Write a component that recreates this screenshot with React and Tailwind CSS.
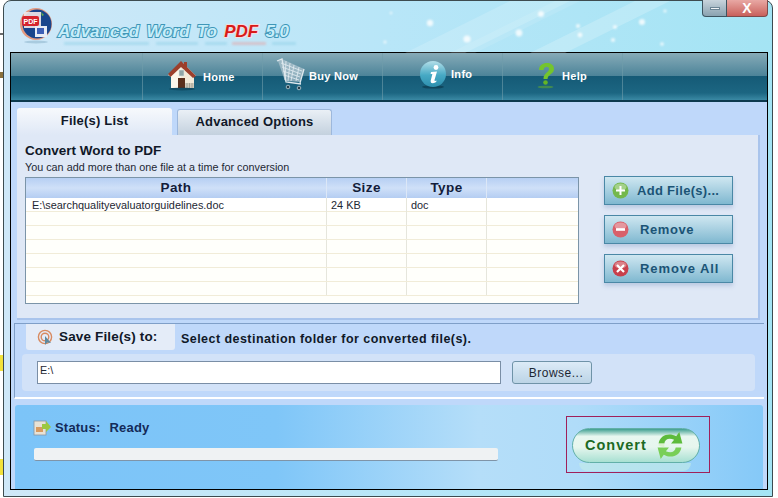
import React from 'react';

const sans = "font-['Liberation_Sans',Arial,sans-serif]";

const HomeIcon = () => (
  <svg width="30" height="32" viewBox="0 0 30 32">
    <path d="M14 3 L1 16 L4 18 L4 29 L27 29 L27 17 L29 17 L20 8 L20 4 L17 4 L17 5 Z" fill="#f2ead9" />
    <path d="M14 2 L1 15 L3.5 18 L14 8 L26 19 L29 17 L20 8 L20 3 L17 3 L17 5 Z" fill="#9c3f2c" />
    <path d="M4 18 L14 9 L14 29 L4 29 Z" fill="#fbf6ea" />
    <rect x="11" y="19" width="7" height="10" fill="#5a2f1c" />
    <rect x="12" y="11" width="5" height="6" fill="#8fa6a8" stroke="#dfe6e2" strokeWidth="0.6" />
    <rect x="18" y="24" width="9" height="5" fill="#cfcabc" />
    <path d="M20 24v5M22.5 24v5M25 24v5" stroke="#8b8779" strokeWidth="0.6" />
    <ellipse cx="15" cy="30" rx="13" ry="1.4" fill="#0c3d52" opacity="0.6" />
  </svg>
);

const CartIcon = () => (
  <svg width="32" height="34" viewBox="0 0 32 34">
    <path d="M3 3 L7 1 L29 11 L25 24 L10 23 Z" fill="#a9c0cc" opacity="0.8" />
    <path d="M6 5l21 8M7 9l19 7M8 13l17 6M9 17l15 5M11 3l-1 19M15 5l-2 18M19 7l-3 16M24 9l-3 14" stroke="#e4eef2" strokeWidth="0.8" />
    <path d="M2 3 L7 1 L11 24 L26 26 M29 11 L25 25" fill="none" stroke="#dfe9ee" strokeWidth="1.3" />
    <circle cx="13" cy="29" r="1.8" fill="#26404c" stroke="#cfdde3" strokeWidth="0.7" />
    <circle cx="24" cy="30" r="1.8" fill="#26404c" stroke="#cfdde3" strokeWidth="0.7" />
  </svg>
);

const InfoIcon = () => (
  <svg width="28" height="29" viewBox="0 0 28 29">
    <defs>
      <linearGradient id="infoFill" x1="0" y1="0" x2="0" y2="1">
        <stop offset="0" stopColor="#b4dfe9" />
        <stop offset="0.55" stopColor="#46a9c4" />
        <stop offset="1" stopColor="#2d8fae" />
      </linearGradient>
    </defs>
    <ellipse cx="14" cy="27" rx="11" ry="1.6" fill="#0a3346" opacity="0.6" />
    <circle cx="14" cy="14" r="13" fill="url(#infoFill)" />
    <circle cx="17" cy="7.5" r="2.4" fill="#fff" />
    <path d="M12 12 L18 11.5 L15.5 20 Q15.2 21.6 17.5 20.6 L17.2 22 Q11.5 24.8 11.6 21 L13.4 14 L11.6 14 Z" fill="#fff" />
  </svg>
);

const HelpIcon = () => (
  <svg width="20" height="27" viewBox="0 0 20 27">
    <path d="M3 8 C3 -1 18 -1 18 7 C18 12 12 12 11.5 17 L7.5 17 C7.5 10.5 13 10.5 13 7 C13 4 8 4 7.5 8 Z" fill="#74c52c" />
    <circle cx="9.5" cy="20.5" r="2.3" fill="#64b525" />
    <ellipse cx="9.5" cy="25" rx="8" ry="1.3" fill="#62ab2e" opacity="0.55" />
  </svg>
);

const Logo = () => (
  <svg width="34" height="36" viewBox="0 0 34 36">
    <circle cx="17" cy="16" r="16" fill="#e39a80" />
    <circle cx="18" cy="16" r="14.5" fill="#19458c" />
    <path d="M5 4 L22 4 L22 20 L5 20 Z" fill="#f3e8e8" opacity="0.9" />
    <rect x="3" y="8" width="17" height="10" rx="2" fill="#d5242c" />
    <text x="4.5" y="16" fontSize="7" fontWeight="700" fill="#fff" fontFamily="Liberation Sans">PDF</text>
    <path d="M22 4l3 3-2 1z" fill="#62b04a" />
    <rect x="16" y="18" width="12" height="11" fill="#e6ebf5" />
    <rect x="18" y="20" width="7" height="6" fill="#3d5fb5" />
    <ellipse cx="17" cy="34" rx="12" ry="1.4" fill="#7fa9c0" opacity="0.45" />
  </svg>
);

const Sparkles = () => (
  <svg className="absolute inset-0" width="100%" height="52" aria-hidden="true">
    <polygon points="395,52 500,0 560,0 455,52" fill="#fff" opacity="0.16" />
    <polygon points="520,52 625,0 660,0 555,52" fill="#fff" opacity="0.2" />
    <polygon points="440,52 545,0 570,0 465,52" fill="#fff" opacity="0.1" />
    <g className="blur-[1px]">
      {[
        [420, 22, 3.2], [457, 38, 3.6], [509, 32, 3.4], [531, 13, 3], [570, 34, 2.4], [568, 25, 2],
        [605, 26, 2], [603, 39, 2], [632, 21, 3], [652, 43, 1.8], [375, 41, 1.5], [655, 10, 1.6], [381, 12, 1.2],
      ].map(([x, y, r], i) => (
        <circle key={i} cx={x} cy={y} r={r} fill="#fff" opacity="0.8" />
      ))}
    </g>
    {/* faint reflection under the title */}
    <g className="blur-[1px]" opacity="0.5">
      <rect x="54" y="41" width="85" height="3" fill="#8fd0e6" />
      <rect x="146" y="41" width="42" height="3" fill="#8fd0e6" />
      <rect x="195" y="41" width="22" height="3" fill="#8fd0e6" />
      <rect x="222" y="41" width="34" height="3" fill="#e8a0a0" />
      <rect x="262" y="41" width="24" height="3" fill="#8fd0e6" />
    </g>
  </svg>
);

const ToolItem = ({ icon, label, iconClass, textClass }) => (
  <div className="w-[120px] h-full border-r border-[#6f9caa]/60 relative flex items-center">
    <div className={iconClass}>{icon}</div>
    <span className={`${sans} ${textClass} text-[11px] font-bold tracking-[0.3px] text-white`}>{label}</span>
  </div>
);

const SideButton = ({ icon, label, labelClass }) => (
  <button className={`${sans} h-[29px] w-[129px] flex items-center border border-[#4a88a6] bg-gradient-to-b from-[#cfe7f1] to-[#7fb8d0] shadow-[0_3px_4px_rgba(120,150,190,0.35)]`}>
    <span className="ml-[7px] w-[17px] h-[17px] flex items-center justify-center">{icon}</span>
    <span className={`${labelClass} text-[13px] font-bold text-[#1b5476]`}>{label}</span>
  </button>
);

const RoundBadge = ({ bg, children }) => (
  <svg width="17" height="17" viewBox="0 0 17 17">
    <circle cx="8.5" cy="8.5" r="8" fill={bg} />
    <ellipse cx="8.5" cy="5" rx="6" ry="3.5" fill="#fff" opacity="0.35" />
    {children}
  </svg>
);

const ConvertArrows = () => (
  <svg width="30" height="31" viewBox="0 0 28 30">
    <path d="M3 13 C4 5 13 2 20 6 L23 2 L26 13 L15 13 L18 9.5 C13 7 9 9 8.5 13 Z" fill="#5dbb3c" />
    <path d="M25 17 C24 25 15 28 8 24 L5 28 L2 17 L13 17 L10 20.5 C15 23 19 21 19.5 17 Z" fill="#79cf58" />
    <path d="M3 13 L8.5 13 L8.5 17 L3 15 Z" fill="#d7f0c4" opacity="0.75" />
  </svg>
);

const rows = [0, 1, 2, 3, 4, 5, 6];

export default function App() {
  return (
    <div className={`${sans} w-[778px] h-[498px] bg-white flex overflow-hidden`}>
      {/* bits of the desktop behind the window */}
      <div className="w-[3px] flex flex-col shrink-0">
        <div className="h-[33px]" />
        <div className="h-[2px] bg-[#6b6b6b]" />
        <div className="h-[37px]" />
        <div className="h-[6px] bg-[#8a6f3a]" />
        <div className="h-[277px]" />
        <div className="h-[16px] bg-[#f3e23a]" />
        <div className="h-[88px]" />
        <div className="h-[16px] bg-[#f3e23a]" />
      </div>

      <div className="w-[770px] h-[497px] shrink-0 flex flex-col pl-[6px] pr-[4px] pb-[6px] rounded-t-[8px] border border-[#3d4c50] bg-gradient-to-r from-[#cfe8f8] via-[#b8e6f8] to-[#a4e4f4]">
        {/* Title */}
        <div className="relative h-[51px] flex items-start shrink-0">
          <Sparkles />
          <div className="relative ml-[9px] mt-[7px]"><Logo /></div>
          <div className="relative ml-[5px] mt-[20px]">
            <div className="text-[17px] font-bold italic [word-spacing:2.5px] leading-[22px] whitespace-nowrap text-[#c6eefa] [paint-order:stroke_fill] [-webkit-text-stroke:2px_#3f97b8]">
              Advanced Word To <span className="text-[#d81a1a] [-webkit-text-stroke:2px_#f5dcdc]">PDF</span> 5.0
            </div>
          </div>
          <div className="relative ml-auto flex h-[17px] -mt-px">
            <div className="w-[25px] flex items-center justify-center rounded-bl-[4px] border border-t-0 border-[#3d5460] bg-gradient-to-b from-[#c8d4dc] to-[#8aa2b0]">
              <div className="w-[10px] h-[3px] bg-[#eef2f4] border border-[#6c8494]" />
            </div>
            <div className="w-[41px] flex items-center justify-center rounded-br-[4px] border-b border-r border-[#7d4a4a] bg-gradient-to-b from-[#e8a8a4] to-[#c8605c] text-[14px] font-bold leading-none text-white">
              X
            </div>
          </div>
        </div>

        {/* Main frame */}
        <div className="h-[439px] w-[758px] flex flex-col border border-black bg-[#bfd8fa]">
          <div className="h-[49px] shrink-0 flex pl-[131px] border-b-2 border-[#0d3a4e] bg-[linear-gradient(to_bottom,#86abb8_0%,#4d8499_48%,#155a76_49%,#1c6682_85%,#3a89a4_100%)]">
            <div className="h-full border-l border-[#6f9caa]/60" />
            <ToolItem icon={<HomeIcon />} label="Home" iconClass="absolute left-[24px] top-[6px]" textClass="absolute left-[60px] top-[16px]" />
            <ToolItem icon={<CartIcon />} label="Buy Now" iconClass="absolute left-[12px] top-[5px]" textClass="absolute left-[46px] top-[15px]" />
            <ToolItem icon={<InfoIcon />} label="Info" iconClass="absolute left-[36px] top-[7px]" textClass="absolute left-[68px] top-[13px]" />
            <ToolItem icon={<HelpIcon />} label="Help" iconClass="absolute left-[33px] top-[9px]" textClass="absolute left-[59px] top-[15px]" />
          </div>

          {/* Tabs + file list */}
          <div className="px-[6px] pt-[6px] shrink-0">
            <div className="flex gap-[5px] items-end h-[27px]">
              <div className="w-[155px] h-[27px] flex items-center justify-center rounded-t-[3px] bg-gradient-to-b from-[#f7f9fc] to-[#dfe8f6] pb-[2px] text-[13px] font-bold tracking-[0.2px] text-[#101828]">
                File(s) List
              </div>
              <div className="w-[155px] h-[26px] flex items-center justify-center rounded-t-[3px] border border-b-0 border-[#9db8dc] bg-gradient-to-b from-[#eaf0f6] to-[#c4d1de] pb-[2px] text-[13px] font-bold tracking-[0.2px] text-[#101828]">
                Advanced Options
              </div>
            </div>
            <div className="h-[185px] w-[743px] flex border-r-2 border-b-2 border-[#a9c4ec] bg-[#dfe8f6] pl-[8px]">
              <div className="w-[554px] shrink-0">
                <div className="mt-[8px] text-[13.5px] font-bold leading-[16px] text-[#101828]">Convert Word to PDF</div>
                <div className="text-[10.8px] leading-[16px] text-[#1d2733]">You can add more than one file at a time for conversion</div>
                <div className="mt-[2px] h-[127px] border border-[#7b94a8] bg-[#fffffb]">
                  <div className="h-[20px] grid grid-cols-[301px_80px_80px_1fr] bg-gradient-to-b from-[#b6cff3] via-[#cfe0f8] to-[#b4cdf2] text-[13.5px] font-bold tracking-[0.4px] text-[#131c3a]">
                    <div className="text-center border-r border-[#dce7f7] leading-[20px]">Path</div>
                    <div className="text-center border-r border-[#dce7f7] leading-[20px]">Size</div>
                    <div className="text-center border-r border-[#dce7f7] leading-[20px]">Type</div>
                    <div />
                  </div>
                  {rows.map((r) => (
                    <div key={r} className={`${r === 0 ? 'bg-white' : ''} h-[14px] grid grid-cols-[301px_80px_80px_1fr] border-b border-[#f1ecd8] text-[10.9px] leading-[14px] text-[#1d2733]`}>
                      <div className="pl-[6px] border-r border-[#e6e6dc]">{r === 0 && 'E:\\searchqualityevaluatorguidelines.doc'}</div>
                      <div className="pl-[4px] border-r border-[#e6e6dc]">{r === 0 && '24 KB'}</div>
                      <div className="pl-[4px] border-r border-[#e6e6dc]">{r === 0 && 'doc'}</div>
                      <div />
                    </div>
                  ))}
                </div>
              </div>
              <div className="ml-[25px] pt-[41px] flex flex-col gap-[10px]">
                <SideButton
                  label="Add File(s)..."
                  labelClass="ml-[8px] tracking-[0.3px]"
                  icon={<RoundBadge bg="#74b84c"><path d="M4 8.5h9M8.5 4v9" stroke="#fff" strokeWidth="2" /></RoundBadge>}
                />
                <SideButton
                  label="Remove"
                  labelClass="ml-[11px] tracking-[0.6px]"
                  icon={<RoundBadge bg="#d8606a"><path d="M4 8.5h9" stroke="#fff" strokeWidth="2.6" /></RoundBadge>}
                />
                <SideButton
                  label="Remove All"
                  labelClass="ml-[11px] tracking-[0.9px]"
                  icon={<RoundBadge bg="#c8404c"><path d="M5 5l7 7M12 5l-7 7" stroke="#fff" strokeWidth="2.2" /></RoundBadge>}
                />
              </div>
            </div>
          </div>

          {/* Save section */}
          <div className="h-[76px] mt-[3px] mx-[3px] shrink-0 border-t border-l border-[#7f9fc8] border-b-2 border-b-white px-[11px]">
            <div className="flex items-center h-[26px]">
              <div className="w-[149px] h-[26px] flex items-center rounded-b-[3px] bg-[#e4ecf8]">
                <svg className="ml-[11px]" width="16" height="16" viewBox="0 0 16 16">
                  <circle cx="8" cy="8" r="6.6" fill="none" stroke="#d88a60" strokeWidth="1.4" />
                  <circle cx="8" cy="8" r="3.8" fill="none" stroke="#d88a60" strokeWidth="1.4" />
                  <path d="M8 7 L8 16 L10.2 13.4 L14 14 Z" fill="#5d8aa0" />
                </svg>
                <span className="ml-[6px] text-[13.5px] font-bold tracking-[0.15px] text-[#101828]">Save File(s) to:</span>
              </div>
              <span className="ml-[6px] mt-[5px] text-[12.5px] font-bold tracking-[0.45px] text-[#101828]">Select destination folder for converted file(s).</span>
            </div>
            <div className="mt-[4px] h-[37px] -ml-[4px] w-[733px] rounded-[4px] bg-[#d2e2f8] flex items-center pl-[15px]">
              <div className="w-[464px] h-[23px] border border-[#7a8ea6] bg-white pl-[2px] text-[10.8px] leading-[17px] text-[#1d2733]">E:\</div>
              <button className="ml-[11px] w-[80px] h-[23px] pl-[8px] rounded-[3px] border border-[#6f93a8] bg-gradient-to-b from-[#dcebf7] to-[#bcd4e6] text-[12px] tracking-[0.5px] text-[#1d2733]">
                Browse...
              </button>
            </div>
          </div>

          {/* Status section */}
          <div className="h-[84px] mx-[4px] mt-[6px] rounded-t-[3px] flex bg-[linear-gradient(to_right,#7cc4f8_0%,#7fc6f8_35%,#b5def9_62%,#b0dcf9_75%,#85c9f8_100%)]">
            <div className="w-[551px] pl-[18px] pt-[12px] shrink-0">
              <div className="flex items-center h-[22px]">
                <svg width="18" height="16" viewBox="0 0 18 16">
                  <rect x="1" y="1" width="12" height="14" fill="#e8e2d6" stroke="#8a96a2" strokeWidth="0.8" />
                  <rect x="3" y="7" width="7" height="5" fill="#d89a60" />
                  <path d="M9 4 L13 4 L13 1 L18 7 L13 12 L13 9 L9 9 Z" fill="#9cc840" />
                </svg>
                <span className="ml-[4px] text-[13px] font-bold tracking-[0.2px] text-[#142a58]">Status:</span>
                <span className="ml-[9px] text-[13px] font-bold tracking-[0.2px] text-[#142a58]">Ready</span>
              </div>
              <div className="ml-px mt-[9px] w-[464px] h-[13px] rounded-[2px] border-b border-[#7f94a8] bg-[#eff2f3]" />
            </div>
            <div className="relative mt-[11px] w-[144px] h-[57px] border border-[#a0205a] flex items-start pl-[5px] pt-[11px]">
              <button className="relative w-[128px] h-[35px] flex items-center rounded-full border border-[#62b0a8] bg-[linear-gradient(to_bottom,#3e9f90_0%,#e8f7f0_22%,#e6f6ee_55%,#a8e0d2_100%)] pl-[12px] text-[14.5px] font-bold tracking-[1px] text-[#1c6a24]">
                Convert
                <span className="absolute left-[82px] top-[1px]"><ConvertArrows /></span>
              </button>
              <div className="absolute left-[12px] top-[46px] w-[112px] h-[8px] rounded-b-full bg-[#c4ece6]/60" />
            </div>
          </div>
        </div>
      </div>
    </div>
  );
}
